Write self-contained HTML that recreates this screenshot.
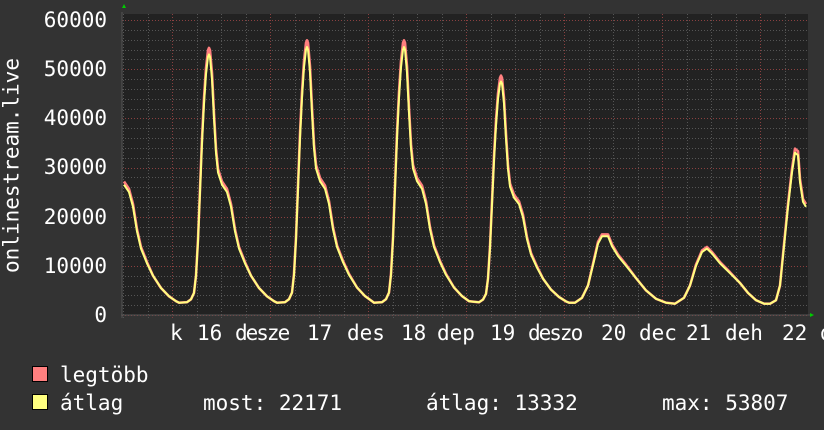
<!DOCTYPE html>
<html><head><meta charset="utf-8"><style>
html,body{margin:0;padding:0;background:#333333;width:824px;height:430px;overflow:hidden}
.t{position:absolute;font-family:"DejaVu Sans Mono","Liberation Mono",monospace;font-size:21px;color:#fff;white-space:pre;line-height:1}
</style></head><body>
<svg id="s" width="824" height="430" style="position:absolute;left:0;top:0">
<rect x="122" y="14" width="686" height="301" fill="#222222"/>
<g id="grid"></g>
<path id="pmax" fill="none" stroke="#ff7f7f" stroke-width="2.6" stroke-linejoin="round"/>
<path id="pavg" fill="none" stroke="#ffff7f" stroke-width="2" stroke-linejoin="round"/>
<line x1="121" y1="315" x2="810" y2="315" stroke="#555" stroke-width="1"/>
<line x1="122" y1="12" x2="122" y2="318" stroke="#555" stroke-width="1"/>
<polygon points="122,8 126,8 124,4" fill="#00cc00"/>
<polygon points="810,313 810,317 814,315" fill="#00cc00"/>
</svg>
<div class="t" style="left:-98px;top:155px;width:220px;text-align:center;transform:rotate(-90deg)">onlinestream.live</div>
<div class="t" style="right:717px;top:10px">60000</div>
<div class="t" style="right:717px;top:59px">50000</div>
<div class="t" style="right:717px;top:108px">40000</div>
<div class="t" style="right:717px;top:157px">30000</div>
<div class="t" style="right:717px;top:207px">20000</div>
<div class="t" style="right:717px;top:256px">10000</div>
<div class="t" style="right:717px;top:305px">0</div>
<div class="t" style="left:170px;top:323px">k</div>
<div class="t" style="left:197px;top:323px">16</div>
<div class="t" style="left:235px;top:323px;letter-spacing:-2px">desze</div>
<div class="t" style="left:307px;top:323px">17</div>
<div class="t" style="left:347px;top:323px">des</div>
<div class="t" style="left:401px;top:323px">18</div>
<div class="t" style="left:437px;top:323px">dep</div>
<div class="t" style="left:490px;top:323px">19</div>
<div class="t" style="left:528px;top:323px;letter-spacing:-2px">deszo</div>
<div class="t" style="left:601px;top:323px">20</div>
<div class="t" style="left:639px;top:323px">dec</div>
<div class="t" style="left:686px;top:323px">21</div>
<div class="t" style="left:725px;top:323px">deh</div>
<div class="t" style="left:782px;top:323px">22</div>
<div class="t" style="left:820px;top:323px">d</div>
<div style="position:absolute;left:32px;top:366px;width:14px;height:14px;background:#ff7f7f;border:1px solid #000"></div>
<div style="position:absolute;left:32px;top:394px;width:14px;height:14px;background:#ffff7f;border:1px solid #000"></div>
<div class="t" style="left:60px;top:365px">legtöbb</div>
<div class="t" style="left:60px;top:393px">átlag</div>
<div class="t" style="left:203px;top:393px">most: 22171</div>
<div class="t" style="left:426px;top:393px">átlag: 13332</div>
<div class="t" style="left:662px;top:393px">max: 53807</div>
<script>
var ns="http://www.w3.org/2000/svg",g=document.getElementById("grid");
function ln(x1,y1,x2,y2,c){var l=document.createElementNS(ns,"line");l.setAttribute("x1",x1);l.setAttribute("y1",y1);l.setAttribute("x2",x2);l.setAttribute("y2",y2);l.setAttribute("stroke",c);l.setAttribute("stroke-width",1);l.setAttribute("stroke-dasharray","1,2");g.appendChild(l);}
for(var i=0;i<=30;i++){var y=Math.round(315-i*9.833)+0.5;ln(122,y,808,y,i%5==0?"#8a4040":"#555555");}
for(var k=-2;k<30;k++){var x=Math.round(172+k*24.5)+0.5;if(x<123||x>808)continue;ln(x,14,x,318,(k%4==0)?"#8a4040":"#555555");}
var T=[[-30,2.5],[-22,2.6],[-18,3.2],[-15,4.5],[-13,8],[-11,15],[-9,25],[-7,35],[-5,43],[-3,49],[-1,52.5],[0,53],[1,52.5],[3,48],[5,40],[7,33],[9,29],[13,26.5],[18,25],[22,22],[26,17],[30,13.5],[36,10.5],[42,8],[50,5.5],[58,3.8],[65,2.8],[68,2.5]];
var pts=[];
function day(px,P,from,to){T.forEach(function(t){var x=px+t[0];if(x<from||x>to)return;pts.push([x,2.5+(t[1]-2.5)*(P-2.5)/50.5]);});}
day(111,53,124,178);day(209,53,179,276);day(307,54.5,277,373);day(404,54.5,374,471);day(501,47.5,472,574);
[[575,2.5],[582,3.5],[588,6],[594,11],[598,14.5],[602,16],[608,16],[612,14],[618,12],[626,10],[636,7.5],[646,5],[656,3.3],[666,2.5],[675,2.3],[684,3.5],[690,6],[696,10],[702,12.8],[707,13.5],[712,12.5],[720,10.5],[730,8.5],[740,6.5],[748,4.5],[756,3],[764,2.3],[770,2.3],[776,3],[780,6],[784,14],[788,22],[792,29],[795,33],[798,32.5],[800,27],[803,23],[806,22]].forEach(function(p){pts.push(p)});
function path(f){return pts.map(function(p,i){return (i?"L":"M")+p[0]+","+(315-f(p[1])*4.9167).toFixed(1)}).join("");}
document.getElementById("pavg").setAttribute("d",path(function(v){return v}));
document.getElementById("pmax").setAttribute("d",path(function(v){return v>8?v*1.025:v}));
</script>
</body></html>
